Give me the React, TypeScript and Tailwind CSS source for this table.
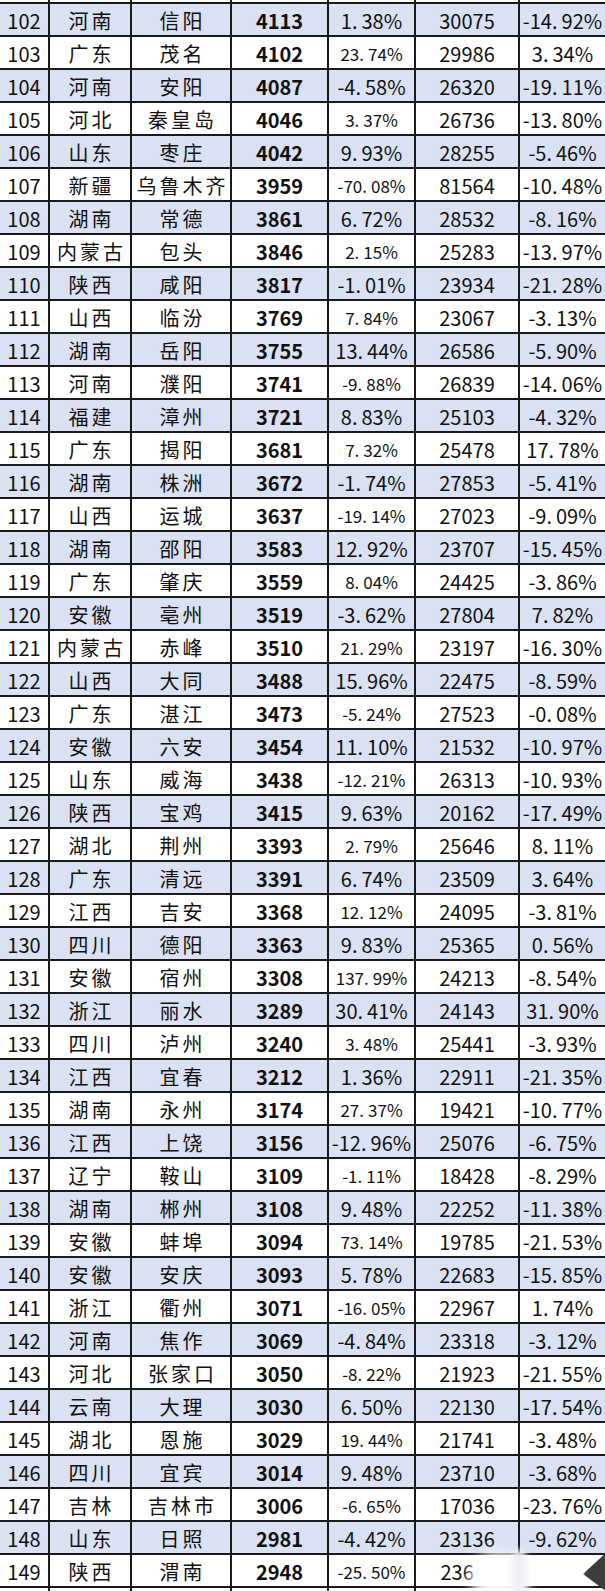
import React from "react";

type Row = [number, string, string, string, string, string, string];

const data: Row[] = [
  [102, "河南", "信阳", "4113", "1.38%", "30075", "-14.92%"],
  [103, "广东", "茂名", "4102", "23.74%", "29986", "3.34%"],
  [104, "河南", "安阳", "4087", "-4.58%", "26320", "-19.11%"],
  [105, "河北", "秦皇岛", "4046", "3.37%", "26736", "-13.80%"],
  [106, "山东", "枣庄", "4042", "9.93%", "28255", "-5.46%"],
  [107, "新疆", "乌鲁木齐", "3959", "-70.08%", "81564", "-10.48%"],
  [108, "湖南", "常德", "3861", "6.72%", "28532", "-8.16%"],
  [109, "内蒙古", "包头", "3846", "2.15%", "25283", "-13.97%"],
  [110, "陕西", "咸阳", "3817", "-1.01%", "23934", "-21.28%"],
  [111, "山西", "临汾", "3769", "7.84%", "23067", "-3.13%"],
  [112, "湖南", "岳阳", "3755", "13.44%", "26586", "-5.90%"],
  [113, "河南", "濮阳", "3741", "-9.88%", "26839", "-14.06%"],
  [114, "福建", "漳州", "3721", "8.83%", "25103", "-4.32%"],
  [115, "广东", "揭阳", "3681", "7.32%", "25478", "17.78%"],
  [116, "湖南", "株洲", "3672", "-1.74%", "27853", "-5.41%"],
  [117, "山西", "运城", "3637", "-19.14%", "27023", "-9.09%"],
  [118, "湖南", "邵阳", "3583", "12.92%", "23707", "-15.45%"],
  [119, "广东", "肇庆", "3559", "8.04%", "24425", "-3.86%"],
  [120, "安徽", "亳州", "3519", "-3.62%", "27804", "7.82%"],
  [121, "内蒙古", "赤峰", "3510", "21.29%", "23197", "-16.30%"],
  [122, "山西", "大同", "3488", "15.96%", "22475", "-8.59%"],
  [123, "广东", "湛江", "3473", "-5.24%", "27523", "-0.08%"],
  [124, "安徽", "六安", "3454", "11.10%", "21532", "-10.97%"],
  [125, "山东", "威海", "3438", "-12.21%", "26313", "-10.93%"],
  [126, "陕西", "宝鸡", "3415", "9.63%", "20162", "-17.49%"],
  [127, "湖北", "荆州", "3393", "2.79%", "25646", "8.11%"],
  [128, "广东", "清远", "3391", "6.74%", "23509", "3.64%"],
  [129, "江西", "吉安", "3368", "12.12%", "24095", "-3.81%"],
  [130, "四川", "德阳", "3363", "9.83%", "25365", "0.56%"],
  [131, "安徽", "宿州", "3308", "137.99%", "24213", "-8.54%"],
  [132, "浙江", "丽水", "3289", "30.41%", "24143", "31.90%"],
  [133, "四川", "泸州", "3240", "3.48%", "25441", "-3.93%"],
  [134, "江西", "宜春", "3212", "1.36%", "22911", "-21.35%"],
  [135, "湖南", "永州", "3174", "27.37%", "19421", "-10.77%"],
  [136, "江西", "上饶", "3156", "-12.96%", "25076", "-6.75%"],
  [137, "辽宁", "鞍山", "3109", "-1.11%", "18428", "-8.29%"],
  [138, "湖南", "郴州", "3108", "9.48%", "22252", "-11.38%"],
  [139, "安徽", "蚌埠", "3094", "73.14%", "19785", "-21.53%"],
  [140, "安徽", "安庆", "3093", "5.78%", "22683", "-15.85%"],
  [141, "浙江", "衢州", "3071", "-16.05%", "22967", "1.74%"],
  [142, "河南", "焦作", "3069", "-4.84%", "23318", "-3.12%"],
  [143, "河北", "张家口", "3050", "-8.22%", "21923", "-21.55%"],
  [144, "云南", "大理", "3030", "6.50%", "22130", "-17.54%"],
  [145, "湖北", "恩施", "3029", "19.44%", "21741", "-3.48%"],
  [146, "四川", "宜宾", "3014", "9.48%", "23710", "-3.68%"],
  [147, "吉林", "吉林市", "3006", "-6.65%", "17036", "-23.76%"],
  [148, "山东", "日照", "2981", "-4.42%", "23136", "-9.62%"],
  [149, "陕西", "渭南", "2948", "-25.50%", "236", ""],
];

const grid = "grid grid-cols-[48px_82px_100px_97px_87px_104px_87px]";
const cell = "flex items-center justify-center border-l-2 border-[#1a1a1a] pt-[2px]";

function Pct({ v }: { v: string }) {
  if (!v) return null;
  const i = v.indexOf(".");
  return (
    <span className="whitespace-nowrap">
      {v.slice(0, i + 1)}
      <span className="ml-[4px]">{v.slice(i + 1)}</span>
    </span>
  );
}

function EmptyRow({ h }: { h: string }) {
  return (
    <div className={`${grid} ${h} bg-white`}>
      <div />
      <div className="border-l-2 border-[#1a1a1a]" />
      <div className="border-l-2 border-[#1a1a1a]" />
      <div className="border-l-2 border-[#1a1a1a]" />
      <div className="border-l-2 border-[#1a1a1a]" />
      <div className="border-l-2 border-[#1a1a1a]" />
      <div className="border-l-2 border-[#1a1a1a]" />
    </div>
  );
}

export default function App() {
  return (
    <div
      className="relative w-[605px] h-[1591px] overflow-hidden bg-white text-[#111]"
      style={{ fontFamily: '"Noto Sans CJK SC", "Noto Sans", sans-serif' }}
    >
      <EmptyRow h="h-[2px]" />
      {data.map((r) => {
        const shaded = r[0] % 2 === 0;
        return (
          <div
            key={r[0]}
            className={`${grid} h-[33px] border-t-2 border-[#1a1a1a] ${
              shaded ? "bg-[#d9e1f2]" : "bg-white"
            }`}
          >
            <div className="flex items-center justify-center pt-[2px] text-[20px] leading-none">
              {r[0]}
            </div>
            <div className={`${cell} text-[20px] leading-none tracking-[3px] pl-[3px]`}>{r[1]}</div>
            <div className={`${cell} text-[20px] leading-none tracking-[3px] pl-[3px]`}>{r[2]}</div>
            <div className={`${cell} text-[20px] leading-none font-bold`}>{r[3]}</div>
            <div className={`${cell} leading-none ${shaded ? "text-[20px]" : "text-[17px]"}`}>
              <Pct v={r[4]} />
            </div>
            <div className={`${cell} text-[20px] leading-none`}>
              {r[0] === 149 ? <span className="w-[53px] text-left">{r[5]}</span> : r[5]}
            </div>
            <div className={`${cell} text-[20px] leading-none`}>
              <Pct v={r[6]} />
            </div>
          </div>
        );
      })}
      <div className="border-t-2 border-[#1a1a1a]">
        <EmptyRow h="h-[4px]" />
      </div>

      {/* watermark overlay */}
      <div className="absolute left-[470px] top-[1552px] w-[60px] h-[50px] rounded-full bg-white blur-[6px] opacity-95" />
      <div className="absolute left-[512px] top-[1550px] w-[14px] h-[45px] rounded-full bg-[#eef0f4] blur-[3px]" />
      <div className="absolute left-[583px] top-[1552px] w-[24px] h-[40px] bg-[#3c3c3c] blur-[1.5px] [clip-path:polygon(100%_0,0_55%,100%_100%)]" />
    </div>
  );
}
